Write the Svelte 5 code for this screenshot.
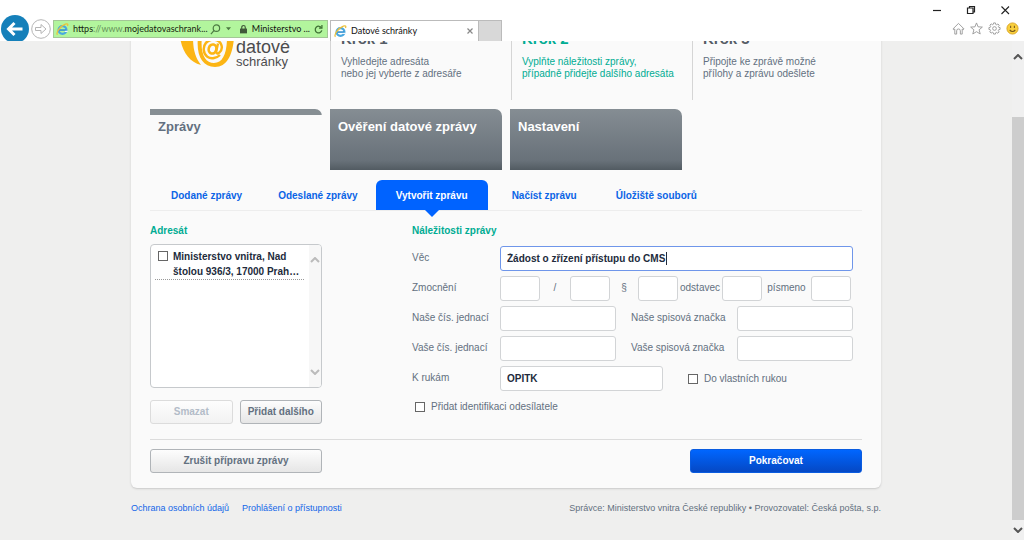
<script lang="ts">
  const steps = [
    { title: "Krok 1", lines: ["Vyhledejte adresáta", "nebo jej vyberte z adresáře"], current: false },
    { title: "Krok 2", lines: ["Vyplňte náležitosti zprávy,", "případně přidejte dalšího adresáta"], current: true },
    { title: "Krok 3", lines: ["Připojte ke zprávě možné", "přílohy a zprávu odešlete"], current: false },
  ];

  const sections = ["Zprávy", "Ověření datové zprávy", "Nastavení"];
  const views = ["Dodané zprávy", "Odeslané zprávy", "Vytvořit zprávu", "Načíst zprávu", "Úložiště souborů"];

  let section = $state("Zprávy");
  let view = $state("Vytvořit zprávu");
  let subject = $state("Žádost o zřízení přístupu do CMS");
  let attention = $state("OPITK");
</script>

{#snippet browserLogo()}
  <svg class="ie" viewBox="0 0 14 14" aria-hidden="true">
    <circle cx="7" cy="7.5" r="4.2" fill="none" stroke="#4aa8e0" stroke-width="2.4" />
    <path d="M3.5 7.6h7.5" stroke="#2f8fd0" stroke-width="1.7" />
    <path d="M9.5 9h3" stroke="#fff" stroke-width="1.2" />
    <path d="M1.6 12.6C-.4 10.8 4.5 3.2 10 1.2c2.4-.8 3.3 0 2.3 2" fill="none" stroke="#ecc03a" stroke-width="1.4" />
  </svg>
{/snippet}

<div class="window">
  <header class="chrome">
    <button class="back" aria-label="Zpět">
      <svg viewBox="0 0 28 28"><circle cx="14" cy="14" r="14" fill="#1580ba" /><path d="M21.5 14H8M13.5 8 7.5 14l6 6" fill="none" stroke="#fff" stroke-width="3" /></svg>
    </button>
    <button class="forward" aria-label="Vpřed">
      <svg viewBox="0 0 20 20" fill="none" stroke="#b5b5b5"><circle cx="10" cy="10" r="9.3" /><path d="M4.5 8.5H10v-3l5 4.5-5 4.5v-3H4.5z" /></svg>
    </button>
    <div class="address">
      {@render browserLogo()}
      <span class="url"><b>https</b>://www.<b>mojedatovaschrank...</b></span>
      <svg class="search" viewBox="0 0 12 12" fill="none" stroke="#4c7a42" stroke-width="1.3"><circle cx="7" cy="4.5" r="3.5" /><path d="M4.5 7 1 11" /></svg>
      <svg class="drop" viewBox="0 0 6 4"><path d="M0 0h6L3 3.5z" fill="#4c7a42" /></svg>
      <svg class="lock" viewBox="0 0 8 10"><path d="M2 5V3a2 2 0 0 1 4 0v2" fill="none" stroke="#40583a" stroke-width="1.3" /><path d="M0 4.5h8V10H0z" fill="#40583a" /></svg>
      <span class="owner">Ministerstvo ...</span>
      <svg class="reload" viewBox="0 0 10 10" fill="none" stroke="#3f7235" stroke-width="1.4"><path d="M8.3 3.2A3.7 3.7 0 1 0 8.7 6" /><path d="M8.8 0v3.5H5.5" /></svg>
    </div>
    <div class="tab">
      {@render browserLogo()}
      <span>Datové schránky</span>
      <button class="tab-close" aria-label="Zavřít kartu">
        <svg viewBox="0 0 6 6"><path d="m.5.5 5 5m0-5-5 5" stroke="#888" stroke-width="1.2" /></svg>
      </button>
    </div>
    <button class="new-tab" aria-label="Nová karta"></button>
    <div class="corner">
      <div class="controls">
        <button aria-label="Minimalizovat"><svg viewBox="0 0 10 10"><path d="M1 5.5h8" stroke="#222" stroke-width="1.2" /></svg></button>
        <button aria-label="Obnovit"><svg viewBox="0 0 10 10" fill="none" stroke="#222" stroke-width="1.2"><path d="M1.5 3H7v5.5H1.5zM3.5 3V1.5h5V7H7" /></svg></button>
        <button aria-label="Zavřít"><svg viewBox="0 0 10 10"><path d="m1.5 1.5 7.5 7.5m0-7.5L1.5 9" stroke="#222" stroke-width="1.1" /></svg></button>
      </div>
      <div class="tools">
        <button aria-label="Domů"><svg viewBox="0 0 14 14" fill="none" stroke="#999"><path d="M1 7.5 7 1.5l6 6-1 .8-1-.8V13H9V9.5a2 2 0 0 0-4 0V13H3V7.5l-1 .8z" /></svg></button>
        <button aria-label="Oblíbené"><svg viewBox="0 0 14 14" fill="none" stroke="#999"><path d="m7 1 1.7 4.2 4.6.3-3.5 2.9 1.2 4.5L7 10.4l-4 2.5 1.2-4.5L.7 5.5l4.6-.3z" /></svg></button>
        <button aria-label="Nástroje"><svg viewBox="0 0 14 14" fill="none" stroke="#999"><circle cx="7" cy="7" r="2" /><path d="M6 1h2l.3 1.6 1 .4 1.4-.9 1.4 1.4-.9 1.3.4 1L13 6v2l-1.5.3-.4 1 .9 1.4-1.4 1.4-1.3-.9-1 .4L8 13H6l-.3-1.5-1-.4-1.4.9-1.4-1.4.9-1.3-.4-1L1 8V6l1.5-.3.4-1L2 3.4 3.4 2l1.3.9 1-.4z" /></svg></button>
        <button aria-label="Odeslat názor"><svg viewBox="0 0 14 14"><circle cx="7" cy="7" r="6" fill="#f9cf3c" stroke="#d9a424" /><path d="M5 4v2.5M9 4v2.5M4 8.5c1.5 2.3 4.5 2.3 6 0" fill="none" stroke="#73551a" stroke-width="1.1" /></svg></button>
      </div>
    </div>
  </header>

  <div class="viewport">
    <div class="page">
      <main class="card">
        <div class="intro">
          <a class="logo" href="#home" aria-label="Datové schránky">
            <svg viewBox="0 0 56 52">
              <path d="M0 20h13C13 32 15 40 21 48 9 45 2 34 0 20z" fill="#fcb514" />
              <path d="M18 20C16 38 22 50 35 50c13 0 18-14 19-30h-7c0 16-4 26-13 26S20 36 22 20z" fill="#fcb514" />
              <ellipse cx="32.5" cy="32" rx="3.8" ry="4.6" fill="none" stroke="#fcb514" stroke-width="2.6" transform="rotate(15 32.5 32)" />
              <path d="M38 26.5 36.3 34c-.4 2.6 1.5 3 3 1.7 5-4.5 2-13-6-13-6.5 0-10 5-9.5 10.500.5 6 5.5 8.8 10.2 7.8 2.5-.5 4.5-1.5 6-3" fill="none" stroke="#fcb514" stroke-width="2.4" />
            </svg>
            <span class="logo-text"><span class="logo-big">datové</span><span>schránky</span></span>
          </a>
          {#each steps as step}
            <section class="step" class:current={step.current}>
              <h2>{step.title}</h2>
              <p>{step.lines[0]}<br />{step.lines[1]}</p>
            </section>
          {/each}
        </div>

        <nav class="sections">
          {#each sections as name}
            <button class:active={section === name} onclick={() => (section = name)}>{name}</button>
          {/each}
        </nav>

        <nav class="views">
          {#each views as name}
            <button class:active={view === name} onclick={() => (view = name)}>{name}</button>
          {/each}
        </nav>

        <div class="columns">
          <section class="recipients">
            <h3>Adresát</h3>
            <div class="list">
              <div class="items">
                <label class="recipient">
                  <input type="checkbox" />
                  <span>Ministerstvo vnitra, Nad štolou 936/3, 17000 Prah…</span>
                </label>
              </div>
              <div class="list-scroll">
                <svg viewBox="0 0 10 6"><path d="m1 5 4-4 4 4" /></svg>
                <svg viewBox="0 0 10 6"><path d="m1 1 4 4 4-4" /></svg>
              </div>
            </div>
            <div class="list-actions">
              <button class="btn" disabled>Smazat</button>
              <button class="btn">Přidat dalšího</button>
            </div>
          </section>

          <section class="details">
            <h3>Náležitosti zprávy</h3>
            <div class="row">
              <label for="subject">Věc</label>
              <div class="subject">
                <input id="subject" type="text" bind:value={subject} />
                <span class="caret" aria-hidden="true"></span>
              </div>
            </div>
            <div class="row">
              <label for="law">Zmocnění</label>
              <div class="mandate">
                <input id="law" type="text" />
                <label for="year">/</label>
                <input id="year" type="text" />
                <label for="paragraph">§</label>
                <input id="paragraph" type="text" />
                <label for="clause">odstavec</label>
                <input id="clause" type="text" />
                <label for="letter">písmeno</label>
                <input id="letter" type="text" />
              </div>
            </div>
            <div class="row">
              <label for="our-ref">Naše čís. jednací</label>
              <div class="pair">
                <input id="our-ref" type="text" />
                <label for="our-file">Naše spisová značka</label>
                <input id="our-file" type="text" />
              </div>
            </div>
            <div class="row">
              <label for="your-ref">Vaše čís. jednací</label>
              <div class="pair">
                <input id="your-ref" type="text" />
                <label for="your-file">Vaše spisová značka</label>
                <input id="your-file" type="text" />
              </div>
            </div>
            <div class="row">
              <label for="attention">K rukám</label>
              <div class="attention">
                <input id="attention" type="text" bind:value={attention} />
                <label class="check"><input type="checkbox" />Do vlastních rukou</label>
              </div>
            </div>
            <label class="check identify"><input type="checkbox" />Přidat identifikaci odesílatele</label>
          </section>
        </div>

        <div class="actions">
          <button class="btn wide">Zrušit přípravu zprávy</button>
          <button class="btn wide primary">Pokračovat</button>
        </div>
      </main>

      <footer>
        <a href="#privacy">Ochrana osobních údajů</a>
        <a href="#accessibility">Prohlášení o přístupnosti</a>
        <span>Správce: Ministerstvo vnitra České republiky • Provozovatel: Česká pošta, s.p.</span>
      </footer>
    </div>

    <div class="scrollbar">
      <svg viewBox="0 0 10 6"><path d="m1 5 4-4 4 4" /></svg>
      <div class="thumb"></div>
      <svg viewBox="0 0 10 6"><path d="m1 1 4 4 4-4" /></svg>
    </div>
  </div>
</div>

<style>
  :global(body) {
    margin: 0;
  }

  .window {
    display: flex;
    flex-direction: column;
    height: 100vh;
    overflow: hidden;
    font-family: "Liberation Sans", Arial, sans-serif;
    font-size: 10px;
    line-height: 12px;
    color: #637080;
  }

  .window * {
    box-sizing: border-box;
  }

  button,
  input {
    font: inherit;
    color: inherit;
  }

  button {
    padding: 0;
    border: 0;
    background: none;
    cursor: pointer;
  }

  svg {
    display: block;
    flex: none;
  }

  /* browser frame */
  .chrome {
    display: flex;
    align-items: flex-start;
    height: 41px;
    flex: none;
    overflow: hidden;
    background: #fff;
    font-family: Lato, "Noto Sans", sans-serif;
    font-size: 9px;
    color: #111;
  }

  .back {
    margin: 15px 2px 0 1px;
  }

  .back svg {
    width: 28px;
    height: 28px;
  }

  .forward {
    margin: 19px 2px 0 0;
  }

  .forward svg {
    width: 20px;
    height: 20px;
  }

  .address {
    display: flex;
    align-items: center;
    flex: 0 0 275px;
    min-width: 0;
    height: 18px;
    margin: 20px 2px 0 0;
    padding: 0 4px 0 2px;
    border: 1px solid #a3c796;
    background: #b2f59d;
  }

  .ie {
    width: 13px;
    height: 13px;
    margin-right: 4px;
  }

  .url {
    flex: 1;
    min-width: 0;
    white-space: nowrap;
    color: #67935b;
  }

  .url b {
    font-weight: 400;
    color: #16240f;
  }

  .search {
    width: 11px;
    height: 11px;
  }

  .drop {
    width: 5px;
    height: 4px;
    margin: 0 9px 0 5px;
  }

  .lock {
    width: 7px;
    height: 10px;
    margin-right: 5px;
  }

  .owner {
    margin-right: 4px;
    white-space: nowrap;
  }

  .reload {
    width: 9px;
    height: 9px;
  }

  .tab {
    display: flex;
    align-items: center;
    flex: 0 0 149px;
    height: 21px;
    margin-top: 20px;
    padding: 0 5px 0 3px;
    border: 1px solid #bbb;
    border-bottom: 0;
  }

  .tab span {
    flex: 1;
    white-space: nowrap;
  }

  .tab-close svg {
    width: 6px;
    height: 6px;
  }

  .new-tab {
    width: 23px;
    height: 21px;
    margin-top: 20px;
    border: 1px solid #bbb;
    border-left: 0;
    border-bottom: 0;
    background: #d8d8d8;
  }

  .corner {
    margin-left: auto;
  }

  .controls {
    display: flex;
    justify-content: flex-end;
    gap: 24px;
    padding: 5px 14px 0 0;
  }

  .controls svg {
    width: 10px;
    height: 10px;
  }

  .tools {
    display: flex;
    justify-content: flex-end;
    gap: 5px;
    padding: 7px 5px 0 0;
  }

  .tools svg {
    width: 13px;
    height: 13px;
  }

  /* page, scrolled slightly down */
  .viewport {
    display: flex;
    flex: 1;
    min-height: 0;
    overflow: hidden;
    background: #efefee;
  }

  .page {
    flex: 1;
    max-width: 750px;
    margin: -24px auto 0;
  }

  .card {
    padding: 0 19px 15px;
    border-radius: 0 0 6px 6px;
    background: #fafafa;
    box-shadow: 0 1px 2px #c8c8c8;
  }

  .intro {
    display: flex;
    height: 83px;
    margin-bottom: 9px;
  }

  .logo {
    display: flex;
    flex: 0 0 180px;
    padding-left: 30px;
    color: #4c4c4e;
    text-decoration: none;
  }

  .logo svg {
    width: 56px;
    height: 52px;
  }

  .logo-text {
    display: flex;
    flex-direction: column;
    padding-top: 22px;
    font-size: 13px;
    line-height: 12px;
  }

  .logo-big {
    font-size: 18px;
    line-height: 17px;
  }

  .step {
    flex: 0 0 181px;
    padding: 13px 0 0 10px;
    border-left: 1px solid #d5d5d5;
    white-space: nowrap;
  }

  .step h2 {
    margin: 0 0 8px;
    font-size: 15px;
    line-height: 18px;
    color: #555d66;
  }

  .step p {
    margin: 0;
  }

  .step.current,
  .step.current h2 {
    color: #00ac93;
  }

  .sections {
    display: flex;
    gap: 8px;
    margin-bottom: 10px;
  }

  .sections button {
    display: flex;
    width: 172px;
    height: 61px;
    padding: 10px 8px 0;
    border-radius: 0 7px 0 0;
    background: linear-gradient(#858d93, #687179 85%, #525b62);
    color: #fff;
    font-size: 13px;
    line-height: 16px;
    font-weight: 700;
    text-align: left;
  }

  .sections .active {
    background: linear-gradient(#868e93 6px, transparent 6px);
    color: #637080;
  }

  .views {
    display: flex;
    border-bottom: 1px solid #ededed;
  }

  .views button {
    position: relative;
    height: 30px;
    padding: 2px 18px 0;
    color: #0a64e6;
    font-weight: 700;
    white-space: nowrap;
  }

  .views button:first-child,
  .views button:last-child {
    padding-left: 21px;
  }

  .views .active {
    width: 112px;
    margin-right: 6px;
    border-radius: 6px 6px 0 0;
    background: #0063ff;
    color: #fff;
  }

  .views .active::after {
    content: "";
    position: absolute;
    top: 100%;
    left: 50%;
    transform: translateX(-50%);
    border: 7px solid transparent;
    border-top-color: #0063ff;
    border-bottom: 0;
  }

  h3 {
    margin: 0;
    font-size: 10px;
    line-height: 12px;
    color: #00ac93;
  }

  .columns {
    display: flex;
    gap: 90px;
    padding: 14px 9px 15px 0;
  }

  .recipients {
    width: 172px;
  }

  .list {
    display: flex;
    height: 144px;
    margin: 7px 0 12px;
    border: 1px solid #c6c9cc;
    border-radius: 4px;
    background: #fff;
    overflow: hidden;
  }

  .items {
    flex: 1;
    min-width: 0;
    padding: 4px 5px 0 4px;
  }

  .recipient {
    display: flex;
    align-items: flex-start;
    gap: 5px;
    padding-left: 3px;
    border-bottom: 1px dotted #999;
    color: #222b3c;
    font-weight: 700;
    line-height: 15px;
  }

  .list-scroll {
    display: flex;
    flex-direction: column;
    justify-content: space-between;
    align-items: center;
    width: 12px;
    padding: 12px 0;
    background: #f7f7f7;
  }

  .list-scroll svg {
    width: 10px;
    height: 6px;
  }

  .list-scroll path,
  .scrollbar path {
    fill: none;
    stroke: #bbb;
    stroke-width: 2;
  }

  .list-actions {
    display: flex;
    gap: 7px;
  }

  .list-actions .btn {
    flex: 1;
  }

  .btn {
    height: 24px;
    border: 1px solid #b0b4b8;
    border-radius: 3px;
    background: linear-gradient(#fdfdfd, #e6e6e6);
    font-weight: 700;
    white-space: nowrap;
  }

  .btn:disabled {
    border-color: #dcdcdc;
    background: linear-gradient(#fdfdfd, #f2f2f2);
    color: #b3bcc8;
  }

  .wide {
    width: 172px;
  }

  .primary {
    border-color: #0a5ce0;
    background: linear-gradient(#0066ff, #0548c4);
    color: #fff;
  }

  .details {
    flex: 1;
  }

  .details h3 {
    margin-bottom: 9px;
  }

  .row {
    display: grid;
    grid-template-columns: 88px 1fr;
    margin-bottom: 5px;
  }

  .row label {
    line-height: 24px;
    white-space: nowrap;
  }

  input[type="text"] {
    width: 100%;
    min-width: 0;
    height: 25px;
    padding: 0 6px;
    border: 1px solid #d2d4d6;
    border-radius: 3px;
    background: #fff;
    color: #222b3c;
    font-weight: 700;
  }

  .subject {
    position: relative;
  }

  #subject {
    border-color: #6f96ea;
    outline: none;
  }

  .caret {
    position: absolute;
    top: 6px;
    left: 166px;
    width: 1px;
    height: 13px;
    background: #222b3c;
    pointer-events: none;
  }

  .mandate {
    display: grid;
    grid-template-columns: 40px 30px 40px 28px 40px 44px 40px 49px 40px;
    text-align: center;
  }

  .pair {
    display: grid;
    grid-template-columns: 1fr 121px 1fr;
  }

  .pair label {
    padding-left: 15px;
  }

  .attention {
    display: flex;
    gap: 25px;
  }

  .attention input[type="text"] {
    width: 163px;
  }

  .check {
    display: flex;
    align-items: center;
    gap: 6px;
  }

  .identify {
    padding: 5px 0 0 3px;
  }

  input[type="checkbox"] {
    appearance: none;
    flex: none;
    width: 10px;
    height: 10px;
    margin: 0;
    border: 1px solid #666;
    background: #fff;
  }

  .recipient input[type="checkbox"] {
    margin-top: 2px;
  }

  .actions {
    display: flex;
    justify-content: space-between;
    padding-top: 9px;
    border-top: 1px solid #dcdcdc;
  }

  footer {
    display: flex;
    gap: 13px;
    padding-top: 14px;
    font-size: 9px;
    white-space: nowrap;
  }

  footer a {
    color: #1366e8;
    text-decoration: none;
  }

  footer span {
    margin-left: auto;
  }

  .scrollbar {
    display: flex;
    flex-direction: column;
    align-items: center;
    width: 12px;
    padding: 13px 0 7px;
    background: #f0f0f0;
  }

  .scrollbar svg {
    width: 10px;
    height: 6px;
  }

  .scrollbar path {
    stroke: #555;
  }

  .thumb {
    flex: 1;
    width: 100%;
    margin: 57px 0 7px;
    background: #cdcdcd;
  }
</style>
